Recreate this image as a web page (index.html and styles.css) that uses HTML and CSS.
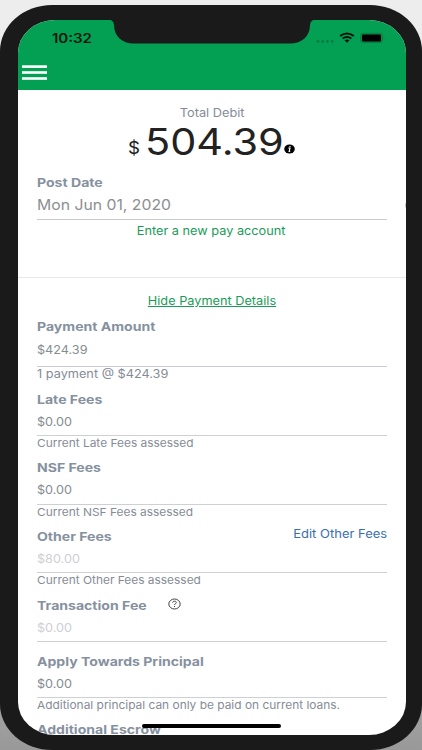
FILE: index.html
```html
<!DOCTYPE html>
<html lang="en">
<head>
<meta charset="utf-8">
<title>Payment</title>
<link rel="stylesheet" href="styles.css">
</head>
<body>
<div class="phone">
  <svg class="notch" width="208" height="26" viewBox="0 0 208 26"><path d="M0 0V1.500Q5.500 1.500 6 7C6 18 14 25.500 26 25.500H182C194 25.500 202 18 202 7Q202.500 1.500 208 1.500V0Z" fill="#1a1a1a"/></svg>
  <main class="screen">
    <header class="bar">
      <div class="status">
        <span class="time wide">10:32</span>
        <svg class="signals" width="70" height="12" viewBox="0 0 70 12">
          <g fill="#077a40"><circle cx="2" cy="9.500" r="1.400"/><circle cx="6.700" cy="9.500" r="1.400"/><circle cx="11.400" cy="9.500" r="1.400"/><circle cx="16.100" cy="9.500" r="1.400"/></g>
          <g fill="none" stroke="#04140b" stroke-width="1.900"><path d="M24.100 4.100Q31 -1 37.900 4.100"/><path d="M26.600 6.600Q31 3.200 35.400 6.600"/></g>
          <path d="M28.500 8.300Q31 6.700 33.500 8.300L31 10.700Z" fill="#04140b"/>
          <rect x="44.500" y="1.300" width="22" height="9.200" rx="2.500" fill="#079149" stroke="#087d40"/>
          <rect x="46" y="2.500" width="19" height="6.900" rx="1.200" fill="#000"/>
          <path d="M67.800 4.500Q69.500 6 67.800 7.500Z" fill="#087d40"/>
        </svg>
      </div>
      <svg class="menu" width="25" height="16" viewBox="0 0 25 16" fill="#fff"><rect y=".3" width="25" height="2.600"/><rect y="6.200" width="25" height="2.600"/><rect y="12.200" width="25" height="2.600"/></svg>
    </header>
    <section class="summary">
      <div class="total-label"><span class="wide mid">Total Debit</span></div>
      <div class="total">
        <span class="currency wide">$</span><span class="amount wide">504.39</span>
        <svg class="info" width="11" height="10" viewBox="0 0 11 10"><ellipse cx="5.500" cy="5" rx="5.300" ry="4.600" fill="#000"/><path d="M4.300 4H6L5.200 7.300H6.200M6 2V3" fill="none" stroke="#fff" stroke-width="1.200"/></svg>
      </div>
      <div class="label"><span class="wide">Post Date</span></div>
      <div class="date"><span class="wide">Mon Jun 01, 2020</span><i class="peek"></i></div>
      <div class="link"><span class="wide mid">Enter a new pay account</span></div>
    </section>
    <section class="details">
      <div class="link toggle"><span class="wide mid">Hide Payment Details</span></div>
      <div class="field first">
        <div class="label"><span class="wide">Payment Amount</span></div>
        <div class="value"><span class="wide">$424.39</span></div>
        <div class="hint"><span class="wide">1 payment @ $424.39</span></div>
      </div>
      <div class="field">
        <div class="label"><span class="wide">Late Fees</span></div>
        <div class="value"><span class="wide">$0.00</span></div>
        <div class="hint"><span class="wide">Current Late Fees assessed</span></div>
      </div>
      <div class="field">
        <div class="label"><span class="wide">NSF Fees</span></div>
        <div class="value"><span class="wide">$0.00</span></div>
        <div class="hint"><span class="wide">Current NSF Fees assessed</span></div>
      </div>
      <div class="field">
        <div class="label"><span class="wide">Other Fees</span><a class="edit wide">Edit Other Fees</a></div>
        <div class="value off"><span class="wide">$80.00</span></div>
        <div class="hint"><span class="wide">Current Other Fees assessed</span></div>
      </div>
      <div class="field short">
        <div class="label"><span class="wide">Transaction Fee</span><svg class="help" width="13" height="12" viewBox="0 0 13 12" fill="none" stroke="#444"><ellipse cx="6.500" cy="6" rx="5.700" ry="5"/><path d="M4.600 4.700C4.700 2.600 8.400 2.700 8.300 4.600C8.200 5.700 6.500 5.700 6.500 7M6.500 8V9"/></svg></div>
        <div class="value off"><span class="wide">$0.00</span></div>
      </div>
      <div class="field">
        <div class="label"><span class="wide">Apply Towards Principal</span></div>
        <div class="value"><span class="wide">$0.00</span></div>
        <div class="hint"><span class="wide">Additional principal can only be paid on current loans.</span></div>
      </div>
      <div class="label"><span class="wide">Additional Escrow</span></div>
    </section>
  </main>
  <div class="home"></div>
</div>
</body>
</html>
```
FILE: styles.css
```css
* { box-sizing: border-box; }
body {
  margin: 0;
  width: 422px;
  height: 750px;
  overflow: hidden;
  background: linear-gradient(#ededed, #e4e4e4 50%, #999);
  font-family: Inter, "Liberation Sans", sans-serif;
}
.phone {
  position: relative;
  width: 422px;
  height: 745px;
  margin-top: 5px;
  padding: 15px 16px 15px 18px;
  background: #1a1a1a;
  border-radius: 52px / 46px;
}
.screen {
  width: 388px;
  height: 715px;
  overflow: hidden;
  background: #fff;
  border-radius: 37px / 33px;
}
.notch { position: absolute; left: 108px; top: 13px; }
.home {
  position: absolute;
  left: 142px;
  top: 719px;
  width: 139px;
  height: 4px;
  border-radius: 2px;
  background: #000;
}
/* Text is drawn stretched horizontally by --sx */
.wide {
  display: inline-block;
  white-space: nowrap;
  transform: scaleX(var(--sx));
  transform-origin: left center;
}
.mid { transform-origin: center; }
.bar { height: 70px; background: #03a054; }
.status { display: flex; height: 44px; padding: 12px 20px 0 33.500px; justify-content: space-between; }
.time { --sx: 1.2; font-size: 12.500px; line-height: 13px; font-weight: 600; color: #06180d; }
.menu { display: block; margin-left: 4px; margin-top: 1px; }
.summary { height: 188px; border-bottom: 1px solid #e7e8ea; padding: 16px 19px 0; }
.total-label { --sx: 1.11; height: 14px; line-height: 14px; font-size: 11.500px; text-align: center; color: #858c98; }
.total { display: flex; height: 43px; padding-left: 91px; color: #222; }
.currency { --sx: 1.1; width: 17px; font-size: 17px; line-height: 56px; }
.amount { --sx: 1.135; width: 139px; font-size: 36.500px; line-height: 44px; }
.info { position: relative; margin-top: 24px; flex: none; }
.label { --sx: 1.172; display: flex; justify-content: space-between; height: 14px; line-height: 14.500px; font-size: 12px; font-weight: 700; color: #8691a0; }
.summary .label { margin-top: 12px; line-height: 15px; }
.date { --sx: 1.087; position: relative; height: 31px; line-height: 32px; font-size: 14.500px; color: #8c8f91; border-bottom: 1px solid #c8cad2; }
/* Edge of the calendar control that sits beyond the screen */
.peek { position: absolute; right: -23px; top: 13px; width: 5px; height: 7px; border-radius: 50%; background: #c4c6c8; }
.link { --sx: 1.107; height: 22px; padding-right: 1px; line-height: 23px; font-size: 11.500px; text-align: center; color: #1a9c58; }
.details { padding: 12px 19px 0; }
.toggle span { text-decoration: underline; }
.field { height: 68.700px; }
.first { height: 72.500px; }
.short { height: 56px; }
.details .field.first { margin-top: 8px; }
.value { --sx: 1.1; height: 29.500px; line-height: 31px; font-size: 11.500px; color: #858c92; border-bottom: 1px solid #cdd0d5; }
.first .value { height: 33px; line-height: 32px; border-color: #c8cad6; }
.off { color: #cdcfd3; }
.hint { --sx: 1.083; line-height: 14.500px; font-size: 11px; color: #858c96; }
.first .hint { --sx: 1.107; line-height: 14px; font-size: 11.500px; }
.edit { --sx: 1.13; transform-origin: right center; font-size: 11.500px; font-weight: 400; line-height: 9px; color: #3a6fae; }
.help { margin: -1px auto 0 37px; }
```
